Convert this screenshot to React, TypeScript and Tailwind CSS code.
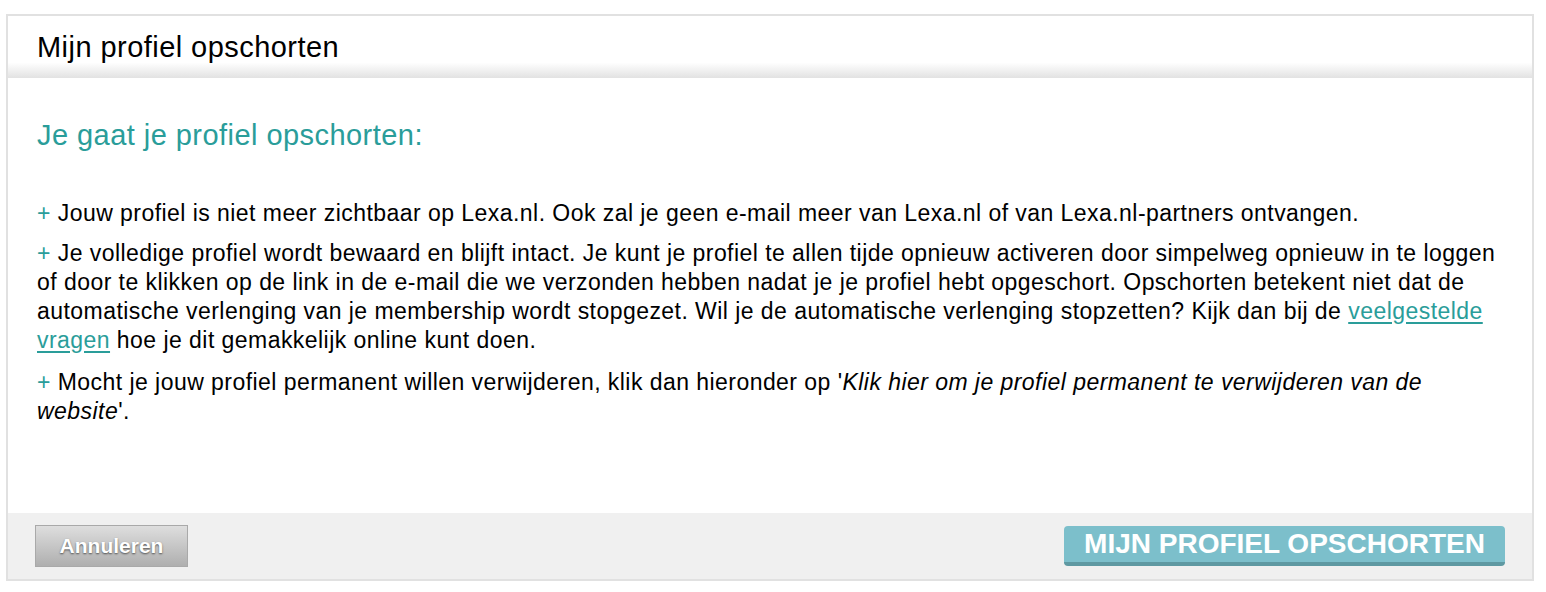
export default function App() {
  return (
    <div className="min-h-screen bg-white pt-[14px] pl-[6px] font-['Liberation_Sans',Arial,sans-serif] text-black">
      <div className="w-[1528px] border-2 border-[#e1e1e1] flex flex-col">
        {/* header */}
        <div className="h-[62px] flex items-center pl-[29px] bg-linear-to-b from-white from-75% to-[#e2e2e2]">
          <h1 className="text-[29px] tracking-[0.45px] leading-none">Mijn profiel opschorten</h1>
        </div>

        {/* body */}
        <div className="h-[435px] bg-white pl-[29px] pr-[32px] pt-[40px]">
          <h2 className="text-[29px] leading-[35px] tracking-[0.45px] text-[#2a9d9a]">Je gaat je profiel opschorten:</h2>

          <div className="mt-[46px] text-[23px] leading-[29px] tracking-[0.45px] flex flex-col gap-[11px]">
            <p>
              <span className="text-[#2a9d9a]">+</span> Jouw profiel is niet meer zichtbaar op Lexa.nl. Ook zal je geen e-mail meer van Lexa.nl of van Lexa.nl-partners ontvangen.
            </p>
            <p>
              <span className="text-[#2a9d9a]">+</span> Je volledige profiel wordt bewaard en blijft intact. Je kunt je profiel te allen tijde opnieuw activeren door simpelweg opnieuw in te loggen of door te klikken op de link in de e-mail die we verzonden hebben nadat je je profiel hebt opgeschort. Opschorten betekent niet dat de automatische verlenging van je membership wordt stopgezet. Wil je de automatische verlenging stopzetten? Kijk dan bij de{' '}
              <a href="#" className="text-[#2a9d9a] underline underline-offset-[3px]">veelgestelde vragen</a> hoe je dit gemakkelijk online kunt doen.
            </p>
            <p className="mt-[2px]">
              <span className="text-[#2a9d9a]">+</span> Mocht je jouw profiel permanent willen verwijderen, klik dan hieronder op '<em>Klik hier om je profiel permanent te verwijderen van de website</em>'.
            </p>
          </div>
        </div>

        {/* footer */}
        <div className="h-[66px] bg-[#f0f0f0] flex items-center justify-between px-[27px]">
          <button className="w-[153px] h-[42px] border border-[#a9a9a9] bg-linear-to-b from-[#dedede] to-[#afafaf] text-white font-bold text-[21px] [text-shadow:0_1px_2px_rgba(0,0,0,0.6)]">
            Annuleren
          </button>
          <button className="w-[441px] h-[40px] rounded-[4px] bg-[#7cbfcb] border-b-4 border-[#5f99a2] text-white font-bold text-[28px] leading-none">
            MIJN PROFIEL OPSCHORTEN
          </button>
        </div>
      </div>
    </div>
  );
}
